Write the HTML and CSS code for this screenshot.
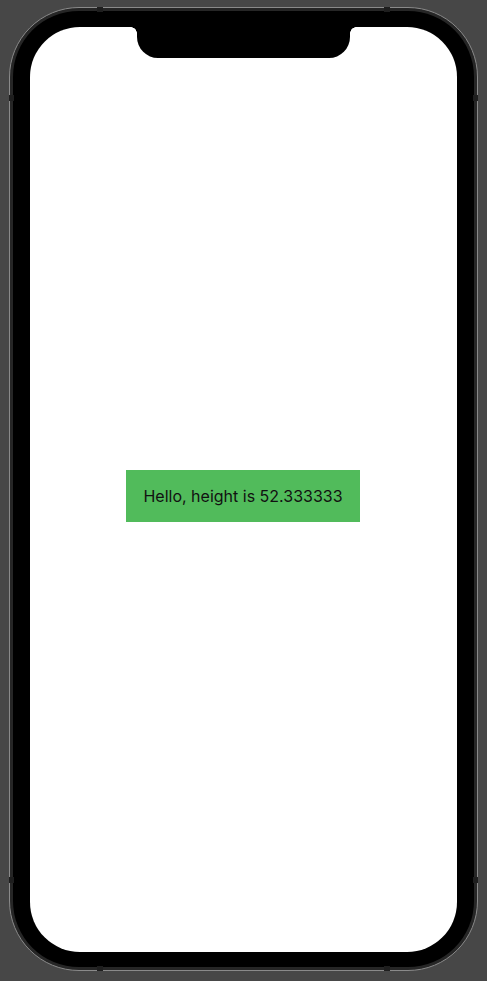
FILE: index.html
```html
<!DOCTYPE html>
<html>
<head>
<meta charset="utf-8">
<link rel="stylesheet" href="styles.css">
</head>
<body>
  <div class="device">
    <span class="band band-top-l"></span>
    <span class="band band-top-r"></span>
    <span class="band band-bot-l"></span>
    <span class="band band-bot-r"></span>
    <span class="band band-left-t"></span>
    <span class="band band-left-b"></span>
    <span class="band band-right-t"></span>
    <span class="band band-right-b"></span>
    <div class="bezel">
      <div class="screen">
        <div class="notch"></div>
        <div class="label">Hello, height is 52.333333</div>
      </div>
    </div>
  </div>
</body>
</html>
```
FILE: styles.css
```css
html, body {
  margin: 0;
  padding: 0;
  background: #474747;
}
body {
  width: 487px;
  height: 981px;
  overflow: hidden;
}
.device {
  position: relative;
  box-sizing: border-box;
  margin: 7px 0 0 9px;
  width: 469px;
  height: 964px;
  border: 1px solid #8a8a8a;
  border-radius: 70px;
  background: #262626;
  padding: 3px;
}
.bezel {
  box-sizing: border-box;
  height: 100%;
  background: #000;
  border-radius: 66px;
  padding: 16px 17px 15px 17px;
}
.screen {
  position: relative;
  box-sizing: border-box;
  height: 100%;
  background: #fff;
  border-radius: 50px;
  padding: 47px 0 34px 0;
  display: flex;
  align-items: center;
  justify-content: center;
}
.notch {
  position: absolute;
  top: 0;
  left: 107px;
  width: 213px;
  height: 31px;
  background: #000;
  border-radius: 0 0 21px 21px;
}
.notch::before,
.notch::after {
  content: "";
  position: absolute;
  top: 0;
  width: 6px;
  height: 6px;
}
.notch::before {
  left: -6px;
  background: radial-gradient(circle at 0 6px, transparent 5.5px, #000 6px);
}
.notch::after {
  right: -6px;
  background: radial-gradient(circle at 6px 6px, transparent 5.5px, #000 6px);
}
.label {
  box-sizing: border-box;
  width: 234px;
  height: 52px;
  background: #51bb5b;
  display: flex;
  align-items: center;
  justify-content: center;
  font-family: Inter, "Liberation Sans", sans-serif;
  font-size: 16px;
  color: #111;
  margin-left: -1px;
}
.band {
  position: absolute;
  background: #1e1e1e;
}
.band-top-l { top: -1px; left: 87px; width: 6px; height: 5px; }
.band-top-r { top: -1px; right: 87px; width: 6px; height: 5px; }
.band-bot-l { bottom: -1px; left: 87px; width: 6px; height: 5px; }
.band-bot-r { bottom: -1px; right: 87px; width: 6px; height: 5px; }
.band-left-t { left: -1px; top: 87px; width: 5px; height: 6px; }
.band-left-b { left: -1px; bottom: 87px; width: 5px; height: 6px; }
.band-right-t { right: -1px; top: 87px; width: 5px; height: 6px; }
.band-right-b { right: -1px; bottom: 87px; width: 5px; height: 6px; }
```
